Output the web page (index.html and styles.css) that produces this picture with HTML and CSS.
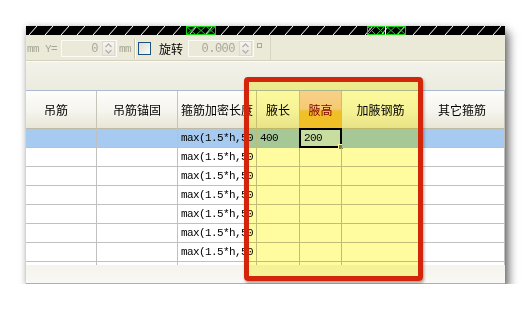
FILE: index.html
```html
<!DOCTYPE html>
<html lang="zh-CN">

<head>
    <meta charset="UTF-8">
    <title>加腋参数</title>
    <link rel="stylesheet" href="styles.css">
</head>

<body>
    <div class="window">
        <svg class="stripe" width="479" height="9" viewBox="0 0 479 9">
            <defs>
                <pattern id="hatch" x="3" width="16" height="9" patternUnits="userSpaceOnUse">
                    <path d="M0 9 L8 0" stroke="#fff" stroke-width="1" />
                </pattern>
            </defs>
            <rect width="479" height="9" fill="#000" />
            <rect width="479" height="9" fill="url(#hatch)" />
            <g stroke="#17d017" stroke-width="1" fill="none">
                <rect x="160.5" y="0.5" width="29" height="8" />
                <path d="M160 0 L170 9 M170 0 L160 9 M170 0 L180 9 M180 0 L170 9 M180 0 L190 9 M190 0 L180 9" />
                <rect x="341.5" y="0.5" width="38" height="8" />
                <path d="M341 0 L350 9 M350 0 L341 9 M350 0 L359 9 M359 0 L350 9 M360 0 L370 9 M370 0 L360 9 M370 0 L380 9 M380 0 L370 9" />
            </g>
            <path d="M359.5 0 V9" stroke="#fff" />
        </svg>

        <div class="toolbar">
            <span class="unit first">mm</span>
            <span class="unit label">Y=</span>
            <div class="field field-y">
                <span class="val">0</span>
                <span class="spin">
                    <svg width="11" height="13" viewBox="0 0 11 13">
                        <path d="M2.5 5 L5.5 2 L8.5 5 M2.5 8 L5.5 11 L8.5 8" stroke="#b4b3ab" stroke-width="1.4" fill="none" />
                    </svg>
                </span>
            </div>
            <span class="unit after">mm</span>
            <span class="sep"></span>
            <span class="check"></span>
            <span class="caption">旋转</span>
            <div class="field field-rot">
                <span class="val">0.000</span>
                <span class="spin">
                    <svg width="11" height="13" viewBox="0 0 11 13">
                        <path d="M2.5 5 L5.5 2 L8.5 5 M2.5 8 L5.5 11 L8.5 8" stroke="#b4b3ab" stroke-width="1.4" fill="none" />
                    </svg>
                </span>
            </div>
            <span class="deg"></span>
            <span class="edge"></span>
        </div>

        <div class="band"></div>

        <div class="grid">
            <div class="hd c1">吊筋</div>
            <div class="hd">吊筋锚固</div>
            <div class="hd">箍筋加密长度</div>
            <div class="hd">腋长</div>
            <div class="hd current">腋高</div>
            <div class="hd">加腋钢筋</div>
            <div class="hd">其它箍筋</div>

            <div class="cell sel"></div>
            <div class="cell sel"></div>
            <div class="cell sel mono">max(1.5*h,50</div>
            <div class="cell sel mono">400</div>
            <div class="cell sel mono active">200<i class="handle"></i></div>
            <div class="cell sel"></div>
            <div class="cell sel"></div>

            <div class="cell"></div><div class="cell"></div><div class="cell mono">max(1.5*h,50</div><div class="cell"></div><div class="cell"></div><div class="cell"></div><div class="cell"></div>
            <div class="cell"></div><div class="cell"></div><div class="cell mono">max(1.5*h,50</div><div class="cell"></div><div class="cell"></div><div class="cell"></div><div class="cell"></div>
            <div class="cell"></div><div class="cell"></div><div class="cell mono">max(1.5*h,50</div><div class="cell"></div><div class="cell"></div><div class="cell"></div><div class="cell"></div>
            <div class="cell"></div><div class="cell"></div><div class="cell mono">max(1.5*h,50</div><div class="cell"></div><div class="cell"></div><div class="cell"></div><div class="cell"></div>
            <div class="cell"></div><div class="cell"></div><div class="cell mono">max(1.5*h,50</div><div class="cell"></div><div class="cell"></div><div class="cell"></div><div class="cell"></div>
            <div class="cell"></div><div class="cell"></div><div class="cell mono">max(1.5*h,50</div><div class="cell"></div><div class="cell"></div><div class="cell"></div><div class="cell"></div>

            <div class="stub"></div><div class="stub"></div><div class="stub"></div><div class="stub"></div><div class="stub"></div><div class="stub"></div><div class="stub"></div>
        </div>

        <div class="hscroll"></div>

        <div class="callout"></div>
    </div>
</body>

</html>
```

FILE: styles.css
```css
body {
    margin: 0;
    background-color: #fff;
    font-family: 'Noto Sans CJK SC', 'DejaVu Sans', sans-serif;
    font-size: 12px;
}

.window {
    position: relative;
    margin: 26px 0 0 26px;
    width: 479px;
    background-color: #ebe9d8;
    box-shadow: 4px 6px 9px rgba(0, 0, 0, 0.55), 0 0 6px rgba(0, 0, 0, 0.18);
}

.stripe {
    display: block;
}

/* toolbar */

.toolbar {
    display: flex;
    align-items: center;
    height: 25px;
    padding-left: 1px;
    border-bottom: 1px solid #d3d0be;
    background-color: #ebe9d8;
    color: #a7a597;
}

.unit {
    font-family: 'Liberation Mono', monospace;
    font-size: 11px;
    letter-spacing: -0.6px;
    width: 12px;
    margin-top: 3px;
}

.label {
    margin-left: 6px;
}

.after {
    margin-left: 2px;
}

.field {
    display: flex;
    align-items: center;
    height: 17px;
    box-sizing: border-box;
    margin-left: 4px;
    margin-top: 2px;
    border: 1px solid #fbfaf6;
    background-color: #ebe9d8;
}

.field-y {
    width: 56px;
}

.field-rot {
    width: 66px;
    margin-left: 5px;
}

.val {
    flex: 1;
    text-align: right;
    padding-right: 4px;
    font-family: 'Liberation Mono', monospace;
    font-size: 12px;
    letter-spacing: -0.5px;
    color: #a9a799;
}

.spin {
    display: flex;
    width: 13px;
    height: 15px;
    margin-right: 1px;
    box-sizing: border-box;
    border: 1px solid #dcdace;
    background: linear-gradient(#f6f5f0, #e9e7dc);
}

.sep {
    width: 1px;
    height: 20px;
    margin-left: 3px;
    margin-top: 2px;
    background-color: #c9c6b4;
    border-right: 1px solid #fdfcf8;
}

.check {
    width: 13px;
    height: 13px;
    box-sizing: border-box;
    margin-left: 2px;
    margin-top: 2px;
    border: 1px solid #1c5180;
    background: linear-gradient(135deg, #dcdbd3, #fdfdfb);
}

.caption {
    margin-left: 8px;
    margin-top: 2px;
    color: #000;
    font-size: 12px;
}

.deg {
    width: 3px;
    height: 3px;
    margin-left: 3px;
    margin-bottom: 4px;
    border: 1px solid #a9a799;
}

.edge {
    width: 1px;
    height: 25px;
    margin-left: 8px;
    background-color: #d8d5c6;
}

.band {
    height: 28px;
    border-top: 1px solid #fbfbf7;
    border-bottom: 1px solid #a9bad2;
    background: linear-gradient(#f3f2ea, #ecebdf);
}

/* grid */

.grid {
    display: grid;
    grid-template-columns: 71px 81px 79px 43px 42px 78px 85px;
    grid-template-rows: 38px repeat(7, 19px) 3px;
    background-color: #fff;
}

.hd {
    display: flex;
    align-items: center;
    justify-content: center;
    box-sizing: border-box;
    border-right: 1px solid #c6c4b6;
    border-bottom: 1px solid #bdbaa8;
    background: linear-gradient(#fdfdfb, #f5f4ee 55%, #e9e6d6);
    color: #000;
    white-space: nowrap;
    overflow: hidden;
}

.hd.c1 {
    padding-right: 10px;
}

.hd.current {
    color: #800000;
    background: linear-gradient(#f8d3dc, #f6cdb8 48%, #f0c341 55%, #f0c23e);
}

.cell {
    position: relative;
    box-sizing: border-box;
    border-right: 1px solid #c0c0c0;
    border-bottom: 1px solid #c0c0c0;
    padding: 0 0 0 3px;
    line-height: 18px;
    white-space: nowrap;
    overflow: hidden;
}

.mono {
    font-family: 'Liberation Mono', monospace;
    font-size: 11px;
    letter-spacing: -0.6px;
    color: #000;
}

.cell.sel {
    background-color: #a6caf0;
}

.cell.active {
    overflow: visible;
    border: 2px solid #000;
    margin: -1px 0 0 -1px;
    padding-left: 3px;
    line-height: 16px;
    background-color: #c8e0ff;
}

.handle {
    position: absolute;
    right: -4px;
    bottom: -4px;
    width: 4px;
    height: 4px;
    background-color: #7d7d7d;
    border: 1px solid #fff;
}

.stub {
    border-right: 1px solid #c0c0c0;
}

.hscroll {
    height: 18px;
    border-bottom: 1px solid #9fb1c6;
    background: linear-gradient(#f4f3ed, #f9f8f4);
}

/* annotation */

.callout {
    position: absolute;
    left: 218px;
    top: 51px;
    width: 179px;
    height: 204px;
    box-sizing: border-box;
    border: 5px solid #d3250b;
    border-radius: 4px;
    box-shadow: 1px 2px 3px rgba(0, 0, 0, 0.35);
}

.callout::before {
    content: '';
    position: absolute;
    inset: 0;
    background-color: #fffca0;
    mix-blend-mode: multiply;
}
```
